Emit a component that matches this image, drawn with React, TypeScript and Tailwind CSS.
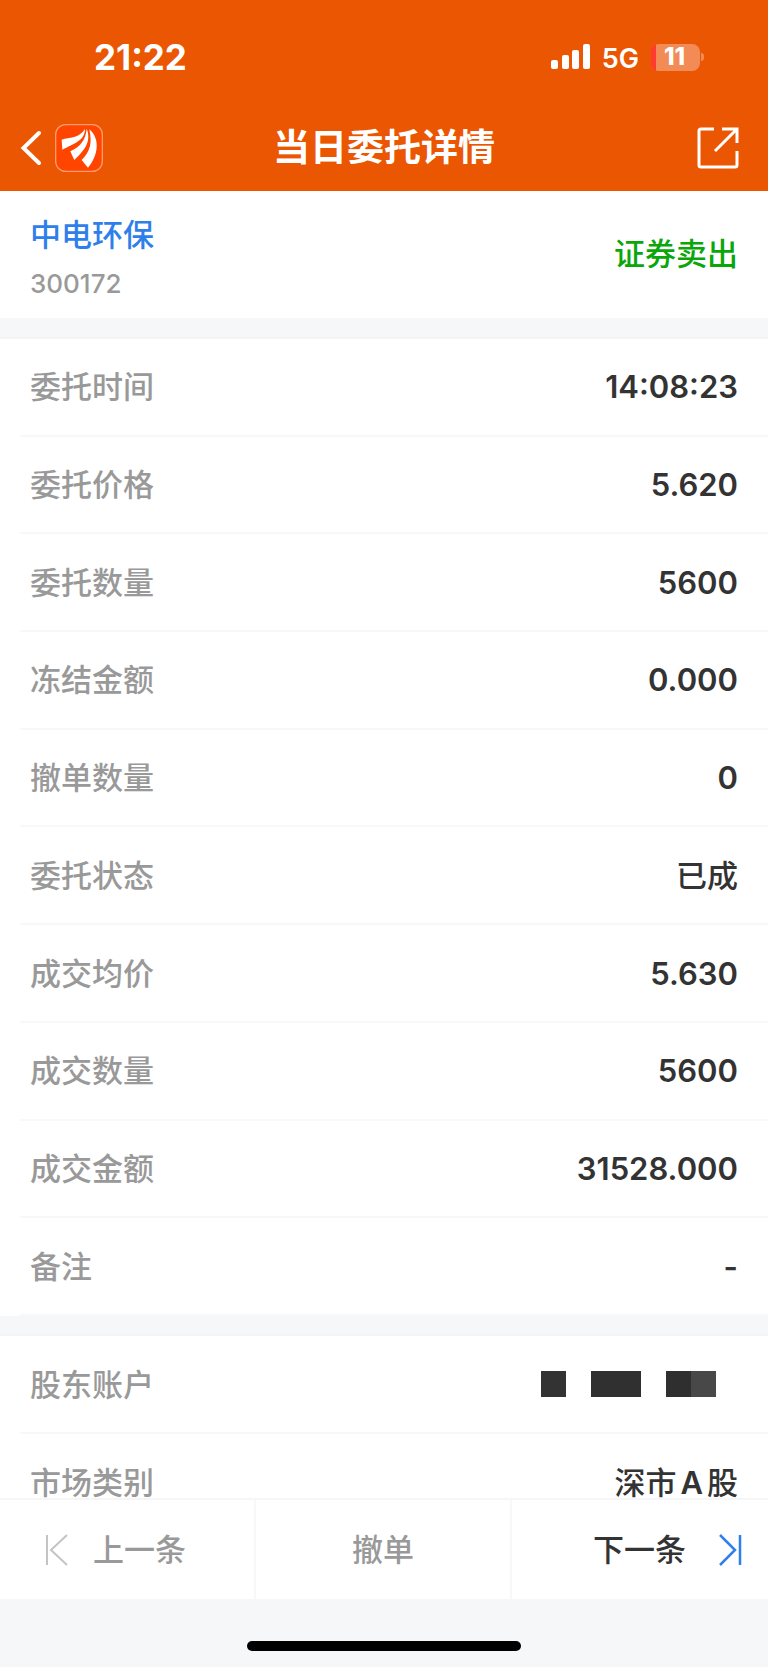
import React from "react";

type Entry = { label: string; value: React.ReactNode };

const orderEntries: Entry[] = [
  { label: "委托时间", value: "14:08:23" },
  { label: "委托价格", value: "5.620" },
  { label: "委托数量", value: "5600" },
  { label: "冻结金额", value: "0.000" },
  { label: "撤单数量", value: "0" },
  { label: "委托状态", value: <span className="font-medium">已成</span> },
  { label: "成交均价", value: "5.630" },
  { label: "成交数量", value: "5600" },
  { label: "成交金额", value: "31528.000" },
  { label: "备注", value: "-" },
];

const accountEntries: Entry[] = [
  { label: "股东账户", value: <MaskedAccount /> },
  {
    label: "市场类别",
    value: (
      <span className="font-medium">
        深市<span className="mx-1 font-semibold">A</span>股
      </span>
    ),
  },
];

function MaskedAccount() {
  return (
    <span className="flex gap-[25px] pr-[22px]">
      <span className="h-[26px] w-[25px] bg-[#333333]" />
      <span className="h-[26px] w-[50px] bg-[#303030]" />
      <span className="flex">
        <span className="h-[26px] w-[25px] bg-[#2f2f2f]" />
        <span className="h-[26px] w-[25px] bg-[#484848]" />
      </span>
    </span>
  );
}

function Rows({ entries }: { entries: Entry[] }) {
  return (
    <dl className="grid flex-1 auto-rows-fr">
      {entries.map((entry) => (
        <div key={entry.label} className="ml-5 flex items-center justify-between border-b-2 border-[#f8f8f9] pr-[30px] pl-[10px] leading-none">
          <dt className="font-medium text-[#999999]">{entry.label}</dt>
          <dd className="font-semibold text-[#333333]">{entry.value}</dd>
        </div>
      ))}
    </dl>
  );
}

function StatusBar() {
  return (
    <div className="flex h-[114px] items-center justify-between pr-[64px] pl-[94px] text-white">
      <span className="text-[35px] leading-none font-bold">21:22</span>
      <div className="flex items-center">
        <svg viewBox="0 0 39 26" className="mr-[12px] h-[26px] w-[39px]" fill="currentColor" aria-hidden="true">
          <rect x="0" y="16" width="7" height="9" rx="2" />
          <rect x="11" y="11" width="7" height="14" rx="2" />
          <rect x="21" y="6" width="7" height="19" rx="2" />
          <rect x="32" y="0" width="7" height="25" rx="2" />
        </svg>
        <span className="mr-[12px] pt-[2px] text-[27px] leading-none font-semibold">5G</span>
        <span className="flex h-[27px] w-[49px] items-center justify-center rounded-[8px] bg-[linear-gradient(to_right,#ff3b30_5px,#f28b55_5px)] pr-[2px] text-[24px] font-extrabold">
          11
        </span>
        <span className="ml-px h-[8px] w-[3px] rounded-r-full bg-[#f28b55]" />
      </div>
    </div>
  );
}

export default function App() {
  return (
    <div className="flex h-screen flex-col bg-[#f6f7f9] font-['Inter','Noto_Sans_CJK_SC',sans-serif] text-[31px]">
      <header className="shrink-0 bg-[#eb5602]">
        <StatusBar />
        <div className="grid h-[77px] grid-cols-[1fr_auto_1fr] items-center px-[20px] pb-[10px] text-white">
          <div className="flex items-center gap-[13px]">
            <button type="button" aria-label="返回">
              <svg viewBox="0 0 22 36" className="h-[36px] w-[22px]" fill="none" stroke="currentColor" strokeWidth="4" strokeLinecap="round" aria-hidden="true">
                <path d="M19 3 3.500 18 19 33" />
              </svg>
            </button>
            <svg viewBox="0 0 144 144" className="size-[48px]" aria-hidden="true">
              <rect x="2" y="2" width="140" height="140" rx="30" fill="#ff4500" stroke="#ff9a6b" strokeWidth="4" />
              <g fill="#fff">
                <path d="M20 47C44 39 72 44 90 15C90 48 60 58 22 77Z" />
                <path d="M46 82C76 68 92 48 95 14C112 56 82 84 58 108Q52 96 46 82Z" />
                <path d="M103 16C138 46 128 98 99 131L80 108C106 82 112 58 103 16Z" />
              </g>
            </svg>
          </div>
          <h1 className="text-[37px] font-bold">当日委托详情</h1>
          <button type="button" aria-label="分享" className="mr-[9px] justify-self-end">
            <svg viewBox="0 0 42 42" className="size-[42px]" fill="none" stroke="currentColor" strokeWidth="3" aria-hidden="true">
              <path d="M17 2H4Q2 2 2 4V38Q2 40 4 40H38Q40 40 40 38V24M25 2H40V16M39 3 18 24" />
            </svg>
          </button>
        </div>
      </header>

      <main className="min-h-0 flex-1 overflow-y-auto [scrollbar-width:none]">
        <section className="flex h-[127px] items-center justify-between bg-white px-[30px]">
          <div className="pt-[6px]">
            <a href="#stock" className="block leading-[46px] font-medium text-[#2f7fea]">中电环保</a>
            <p className="pt-[6px] text-[26px] leading-[40px] font-medium text-[#999999]">300172</p>
          </div>
          <strong className="font-medium text-[#0aa60a]">证券卖出</strong>
        </section>
        <section className="mt-[19px] flex min-h-[979px] flex-col border-t-2 border-[#f3f4f6] bg-white">
          <Rows entries={orderEntries} />
        </section>
        <section className="mt-[18px] flex min-h-[198px] flex-col border-t-2 border-[#f3f4f6] bg-white">
          <Rows entries={accountEntries} />
        </section>
      </main>

      <footer className="shrink-0">
        <nav className="grid h-[101px] grid-cols-3 divide-x-2 divide-[#f8f8f9] border-t-2 border-[#f6f6f8] bg-white leading-none">
          <button type="button" disabled className="flex items-center gap-[25px] pl-[45px] font-medium text-[#999999]">
            <svg viewBox="0 0 23 32" className="h-[32px] w-[23px]" fill="none" stroke="#c4c4c4" strokeWidth="2" aria-hidden="true">
              <path d="M2 1V31M22 1 6 16 22 31" />
            </svg>
            上一条
          </button>
          <button type="button" disabled className="font-medium text-[#999999]">撤单</button>
          <button type="button" className="flex items-center justify-end gap-[33px] pr-[26px] font-medium text-[#333333]">
            下一条
            <svg viewBox="0 0 23 32" className="h-[32px] w-[23px]" fill="none" stroke="#2f7fea" strokeWidth="2.500" aria-hidden="true">
              <path d="M21 1V31M1 1 16 16 1 31" />
            </svg>
          </button>
        </nav>
        <div className="flex h-[68px] items-center justify-center pt-[26px]">
          <div className="h-[10px] w-[274px] rounded-full bg-black" />
        </div>
      </footer>
    </div>
  );
}
